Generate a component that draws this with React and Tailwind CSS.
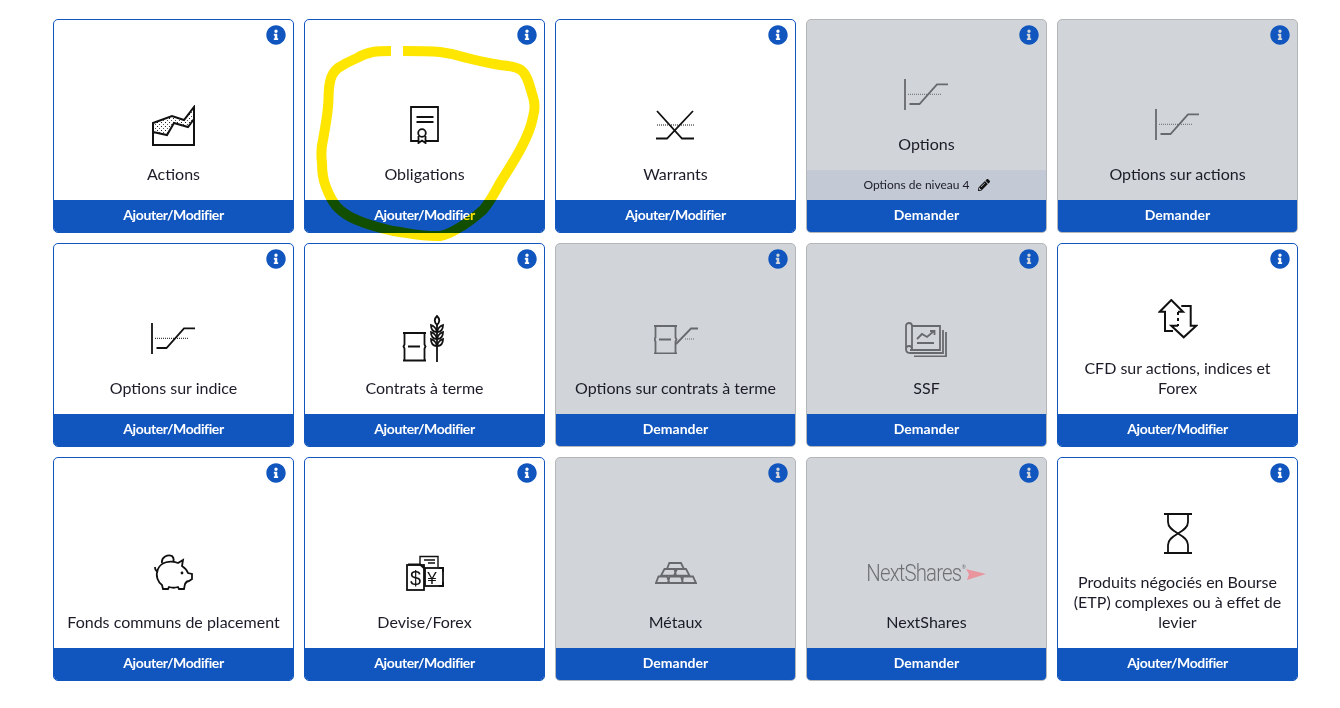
import { FaInfoCircle, FaPencilAlt } from 'react-icons/fa';

const line = { fill: 'none', stroke: 'currentColor', strokeWidth: 1.8 };
const dots = { fill: 'none', stroke: 'currentColor', strokeWidth: 1, strokeDasharray: '1 1' };

function ActionsIcon() {
  return (
    <svg width="44" height="41" viewBox="0 0 44 41">
      <defs>
        <pattern id="speck" width="4" height="4" patternUnits="userSpaceOnUse">
          <rect x="1" y="1" width="1" height="1" fill="#222" />
          <rect x="3" y="3" width="1" height="1" fill="#555" />
        </pattern>
      </defs>
      <path d="M1 18 20 11 32 15 42 2V14L36 22 22 18 15 30 1 27Z" fill="url(#speck)" />
      <path d="M1 18 20 11 32 15 42 2V40H1ZM1 27 15 30 22 18 36 22 42 14" {...line} strokeWidth="2" />
    </svg>
  );
}

function BondIcon() {
  return (
    <svg width="30" height="38" viewBox="0 0 30 38">
      <path d="M8 35H1V1H28V35H16" {...line} />
      <path d="M6.5 11H23.5M6.5 16H23.5" {...line} />
      <circle cx="12" cy="27" r="3.8" {...line} />
      <path d="M8.5 30V37L12 34.5 15.5 37V30" {...line} />
    </svg>
  );
}

function WarrantIcon() {
  return (
    <svg width="40" height="30" viewBox="0 0 40 30">
      <path d="M1 1 26 28.5H38M37 1 11 28.5H0" {...line} />
      <path d="M1 15H38" {...dots} />
    </svg>
  );
}

function OptionIcon() {
  return (
    <svg width="46" height="34" viewBox="0 0 46 34">
      <path d="M1 1V32" {...line} />
      <path d="M5.5 26H15.5L33 6.3H44" {...line} />
      <path d="M4 16.3H38" {...dots} />
    </svg>
  );
}

function Barrel() {
  return (
    <>
      <path d="M0 1H23M0 28.5H23" {...line} />
      <path d="M1.500 1V12.500L0.500 14.500 1.500 16.500V28.500M21.500 1V12.500L22.500 14.500 21.500 16.500V28.500" {...line} />
      <path d="M5 14.500H17" {...line} />
    </>
  );
}

function FuturesIcon() {
  return (
    <svg width="49" height="48" viewBox="-3 0 49 48">
      <g transform="translate(0 17)"><Barrel /></g>
      <path d="M34 10V47" {...line} />
      <path d="M34 1C31 4 31 7 34 10 37 7 37 4 34 1Z" {...line} />
      <path d="M34 17C33 13 31 11 28 10 28 14 30 17 34 17 38 17 40 14 40 10 37 11 35 13 34 17Z" {...line} />
      <path d="M34 24C33 20 31 18 28 17 28 21 30 24 34 24 38 24 40 21 40 17 37 18 35 20 34 24Z" {...line} />
      <path d="M34 31C33 27 31 25 28 24 28 28 30 31 34 31 38 31 40 28 40 24 37 25 35 27 34 31Z" {...line} />
    </svg>
  );
}

function FutureOptionIcon() {
  return (
    <svg width="44" height="29" viewBox="0 0 44 29">
      <Barrel />
      <path d="M22 19 37 3.500H44" {...line} />
      <path d="M31 14H41" {...dots} />
    </svg>
  );
}

function SsfIcon() {
  return (
    <svg width="43" height="35" viewBox="0 0 43 35">
      <path d="M7 4V27C7 23 1 23 1 27V4C1 0 7 0 7 4Z" {...line} />
      <path d="M7 4H35V28H5" {...line} />
      <path d="M1 27C1 30 3 31 5 31H38V8" {...line} />
      <path d="M9 34.500H41V10" {...line} />
      <path d="M12 17 17 12 22 15 29 9M25 9H29.500V13M12 21H29" {...line} />
    </svg>
  );
}

function CfdIcon() {
  return (
    <svg width="40" height="40" viewBox="0 0 40 40">
      <path d="M15 32H7V12.700H1.700L13.300 1 25 12.700H20" {...line} strokeWidth="2" />
      <path d="M23.300 7H32.700V26.700H38.300L25.700 38.300 13.300 26.700H20" {...line} strokeWidth="2" />
      <path d="M20 13V27" {...line} strokeWidth="2" strokeDasharray="3 3" />
    </svg>
  );
}

function PiggyIcon() {
  return (
    <svg width="40" height="38" viewBox="1 0 40 38">
      <path d="M9 9C8 3 15 0 19 2 21 4 21 6 20 8" {...line} />
      <path d="M2 13C2 15 3 17 4 17" {...line} />
      <path d="M29 12 30 6 25 9C17 6 8 8 5 15 2 22 5 28 9 31L10 35H15L16 33C19 34 22 34 25 33L26 35H31L32 30C33 28 35 27 36 27L39 25V20L35 19C34 16 32 14 29 12Z" {...line} />
      <circle cx="29" cy="19" r="1.400" fill="currentColor" />
    </svg>
  );
}

function ForexIcon() {
  return (
    <svg width="38" height="37" viewBox="0 0 38 37">
      <path d="M14 9V1.500H32V12M18 5H29M22 8H29" {...line} strokeWidth="1.400" />
      <rect x="1" y="10" width="17" height="25" {...line} />
      <rect x="19" y="13" width="18" height="18" {...line} />
      <path d="M2 9.500H14L18 13M33 13H37V17M33 31H37V27" {...line} strokeWidth="2" />
      <text x="9.500" y="29.500" textAnchor="middle" fontSize="20" fontFamily="'Liberation Sans', sans-serif" fill="currentColor">$</text>
      <text x="26" y="28.500" textAnchor="middle" fontSize="17" fontFamily="'Liberation Sans', sans-serif" fill="currentColor">¥</text>
    </svg>
  );
}

function MetalIcon() {
  return (
    <svg width="42" height="22" viewBox="0 0 42 22">
      <path d="M14.300 1H26L29 7H12Z" {...line} />
      <path d="M9.500 7H19.500L21 13.700H6ZM22 7H31L34.500 13.700H19Z" {...line} />
      <path d="M3.500 14.500H12L14.500 21H1ZM14.500 14.500H26L28 21H13ZM28 14.500H38L41 21H27Z" {...line} />
    </svg>
  );
}

function NextSharesLogo() {
  return (
    <div className="flex items-center">
      <span className="mx-[-8px] inline-block scale-x-[0.85] font-['Roboto',sans-serif] text-[24px] leading-none font-light tracking-[-1px] text-[#6f7072]">NextShares</span>
      <span className="mb-3 w-[3px] text-[5px] leading-none text-[#6f7072]">®</span>
      <svg width="22" height="12" viewBox="0 0 22 12" className="mt-[3px]">
        <path d="M1 0 21 5 2 11 4 5Z" fill="#e8959e" />
      </svg>
    </div>
  );
}

function HourglassIcon() {
  return (
    <svg width="28" height="41" viewBox="0 0 28 41">
      <path d="M0 1H28M0 40H28" {...line} />
      <path d="M4 1V9C4 14 8 17 14 20.500 20 24 24 27 24 32V40" {...line} />
      <path d="M24 1V9C24 14 20 17 14 20.500 8 24 4 27 4 32V40" {...line} />
    </svg>
  );
}

const cards = [
  { label: 'Actions', icon: <ActionsIcon /> },
  { label: 'Obligations', icon: <BondIcon /> },
  { label: 'Warrants', icon: <WarrantIcon /> },
  { label: 'Options', icon: <OptionIcon />, off: true, sub: 'Options de niveau 4' },
  { label: 'Options sur actions', icon: <OptionIcon />, off: true },
  { label: 'Options sur indice', icon: <OptionIcon /> },
  { label: 'Contrats à terme', icon: <FuturesIcon /> },
  { label: 'Options sur contrats à terme', icon: <FutureOptionIcon />, off: true },
  { label: 'SSF', icon: <SsfIcon />, off: true },
  { label: 'CFD sur actions, indices et Forex', icon: <CfdIcon /> },
  { label: 'Fonds communs de placement', icon: <PiggyIcon /> },
  { label: 'Devise/Forex', icon: <ForexIcon /> },
  { label: 'Métaux', icon: <MetalIcon />, off: true },
  { label: 'NextShares', icon: <NextSharesLogo />, off: true },
  { label: 'Produits négociés en Bourse (ETP) complexes ou à effet de levier', icon: <HourglassIcon /> },
];

function Card({ label, icon, off, sub }) {
  return (
    <div className={`relative flex flex-col overflow-hidden rounded-[5px] border ${off ? 'border-[#b4b7ba] bg-[#d1d5d9]' : 'border-[#1156be] bg-white'}`}>
      <FaInfoCircle className="absolute top-[5px] right-[7px] text-[#1156be]" size={20} />
      <div className="flex flex-1 flex-col items-center justify-end px-2 pb-4">
        <div className={`mb-[14px] flex h-[50px] items-center justify-center ${off ? 'text-[#67696c]' : 'text-[#111]'}`}>
          {icon}
        </div>
        <p className="text-center text-[16px] leading-5 text-[#1c1c28]">{label}</p>
      </div>
      {sub && (
        <div className="flex h-[30px] items-center justify-center gap-2 bg-[#c3cad6] text-[12px] text-[#1c1c28]">
          {sub}
          <FaPencilAlt size={12} className="text-[#111]" />
        </div>
      )}
      <div className={`flex h-8 items-center justify-center bg-[#1156be] pb-[3px] text-[14px] font-bold text-white ${off ? '' : 'tracking-[-0.4px]'}`}>
        {off ? 'Demander' : 'Ajouter/Modifier'}
      </div>
    </div>
  );
}

export default function App() {
  return (
    <div className="relative h-[708px] w-[1340px] overflow-hidden bg-white pt-[19px] pl-[53px] font-['Lato',sans-serif]">
      <div className="grid grid-cols-[repeat(5,241px)] grid-rows-[214px_204px_224px] gap-[10px]">
        {cards.map((c) => (
          <Card key={c.label} {...c} />
        ))}
      </div>
      {/* marqueur jaune dessiné par-dessus la capture */}
      <svg className="pointer-events-none absolute inset-0 mix-blend-multiply" width="1340" height="708" viewBox="0 0 1340 708">
        <path
          d="M391 51C384 51 378 51 373 52 367 53 362 55 357 58 350 61 344 64 338 68 333 72 331 76 330 82 328 90 329 98 328 107 327 118 325 129 323 140 321 148 321 155 322 163 322 172 323 180 326 187 329 195 332 201 337 207 343 213 349 217 357 220 368 225 380 228 393 231 408 233 425 237 440 236 447 235 452 232 457 229 466 224 475 217 483 210 490 202 495 192 500 183 507 172 514 161 520 150 526 139 531 128 533 117 535 110 535 103 533 97 530 88 528 75 521 70 515 66 508 66 500 65 489 63 478 61 467 58 458 55 449 53 440 52 428 51 415 51 403 51"
          fill="none"
          stroke="#ffe600"
          strokeWidth="10"
        />
      </svg>
    </div>
  );
}
